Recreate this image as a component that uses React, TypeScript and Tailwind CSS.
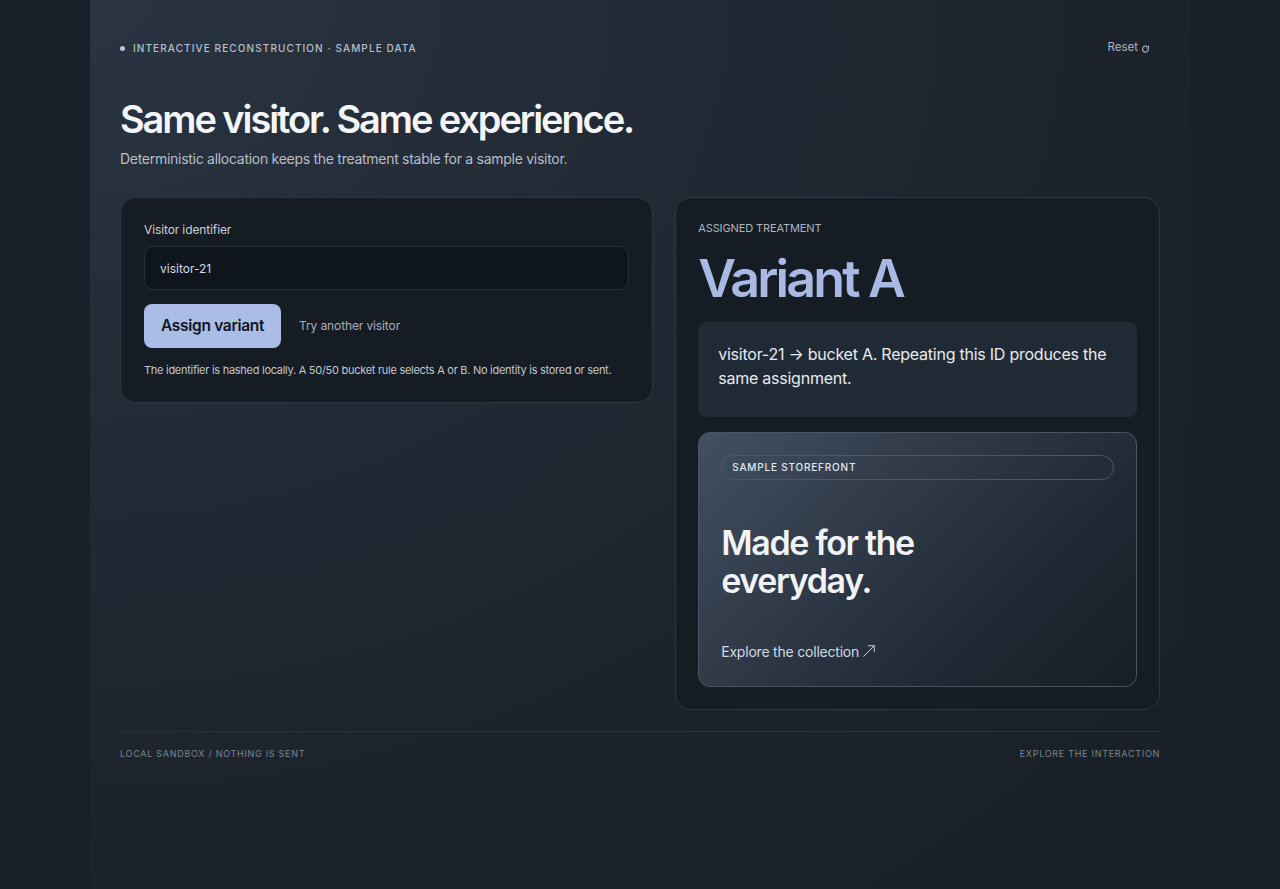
import { useState } from "react";

function ResetIcon() {
  return (
    <svg viewBox="0 0 24 24" className="w-[9px] h-[9px] mt-[2px]" fill="none" stroke="currentColor" strokeWidth="3" strokeLinecap="round" strokeLinejoin="round">
      <path d="M20 11a8 8 0 1 1-4-6.9" />
      <path d="M20 3v5h-5" />
    </svg>
  );
}

function ArrowUpRight() {
  return (
    <svg viewBox="0 0 16 16" className="inline-block w-[14px] h-[14px] ml-[3px] -mt-[3px] align-middle" fill="none" stroke="currentColor" strokeWidth="1.1" strokeLinecap="round" strokeLinejoin="round">
      <path d="M2 14 L14 2" />
      <path d="M7.5 2 H14 V8.5" />
    </svg>
  );
}

export default function App() {
  const [visitor, setVisitor] = useState("visitor-21");

  return (
    <div
      className="min-h-screen bg-[#19202a] text-white"
      style={{ fontFamily: "Inter, 'Noto Sans', sans-serif" }}
    >
      <div className="max-w-[1100px] mx-auto px-[30px] pt-[41px] pb-[120px] min-h-screen bg-[radial-gradient(ellipse_at_top_left,#2a3442_0%,#222a35_35%,#1c232d_65%,#19202a_90%)]">
        <header className="flex items-center justify-between h-[14px]">
          <div className="flex items-center gap-[8px]">
            <span className="w-[5px] h-[5px] rounded-full bg-[#b8c4e0]" />
            <span className="text-[10px] font-medium tracking-[0.11em] text-[#b9c0ca] uppercase">
              Interactive reconstruction · Sample data
            </span>
          </div>
          <button className="flex items-center gap-[3px] text-[11.5px] text-[#aeb5bf] mr-[10px]">
            Reset <ResetIcon />
          </button>
        </header>

        <h1 className="mt-[40px] text-[38px] leading-[48px] font-semibold tracking-[-0.055em] text-[#f3f5f8]">
          Same visitor. Same experience.
        </h1>
        <p className="mt-[5px] text-[14px] tracking-[-0.02em] text-[#b7bec8]">
          Deterministic allocation keeps the treatment stable for a sample visitor.
        </p>

        <div className="mt-[28px] grid grid-cols-[1.1fr_1fr] gap-[22px] items-start">
          <section className="rounded-[16px] border border-[#2c3541] bg-[#161c24] p-[23px] pb-[23px]">
            <label className="block text-[12px] tracking-[-0.01em] text-[#c9cfd7]">Visitor identifier</label>
            <input
              value={visitor}
              onChange={(e) => setVisitor(e.target.value)}
              className="mt-[7px] w-full h-[44px] rounded-[10px] border border-[#27303b] bg-[#0f151c] px-[15px] text-[12px] text-[#d5dbe2] outline-none"
            />
            <div className="mt-[14px] flex items-center gap-[18px]">
              <button className="h-[44px] px-[17px] rounded-[8px] bg-[#abbde7] text-[15.5px] font-semibold tracking-[-0.02em] text-[#10151c]">
                Assign variant
              </button>
              <button className="text-[12px] tracking-[-0.01em] text-[#a8b0ba]">Try another visitor</button>
            </div>
            <p className="mt-[14px] text-[11px] tracking-[-0.025em] text-[#c0c7d0]">
              The identifier is hashed locally. A 50/50 bucket rule selects A or B. No identity is stored or sent.
            </p>
          </section>

          <section className="rounded-[16px] border border-[#2c3541] bg-[#161c24] p-[22px] pb-[22px]">
            <div className="text-[11px] uppercase text-[#acb4bf] tracking-[-0.01em]">Assigned treatment</div>
            <div className="mt-[12px] text-[52px] leading-[60px] font-semibold tracking-[-0.055em] text-[#a9b9e3]">
              Variant A
            </div>
            <div className="mt-[13px] rounded-[8px] bg-[#1f2a35] px-[20px] pt-[20px] pb-[27px] text-[16px] leading-[24px] tracking-[-0.015em] text-[#e7ebf0]">
              visitor-21 → bucket A. Repeating this ID produces the same assignment.
            </div>
            <div className="mt-[15px] rounded-[12px] border border-[#4a5564] bg-[linear-gradient(135deg,#434f62_0%,#2e3846_40%,#202933_70%,#161e27_100%)] px-[22px] pt-[22px] pb-[24px] h-[255px] flex flex-col">
              <div className="h-[25px] rounded-full border border-[#4d5866] flex items-center px-[10px] text-[10px] font-medium tracking-[0.08em] text-[#e2e6eb]">
                SAMPLE STOREFRONT
              </div>
              <div className="mt-[44px] text-[34px] leading-[38px] font-semibold tracking-[-0.04em] text-[#f1f3f6]">
                Made for the
                <br />
                everyday.
              </div>
              <div className="mt-auto text-[14px] tracking-[-0.015em] text-[#d3d9e0]">
                Explore the collection
                <ArrowUpRight />
              </div>
            </div>
          </section>
        </div>

        <footer className="mt-[21px] border-t border-[#29313c] pt-[15px] flex justify-between text-[9px] tracking-[0.08em] text-[#7d8692] uppercase">
          <span>Local sandbox / nothing is sent</span>
          <span>Explore the interaction</span>
        </footer>
      </div>
    </div>
  );
}
